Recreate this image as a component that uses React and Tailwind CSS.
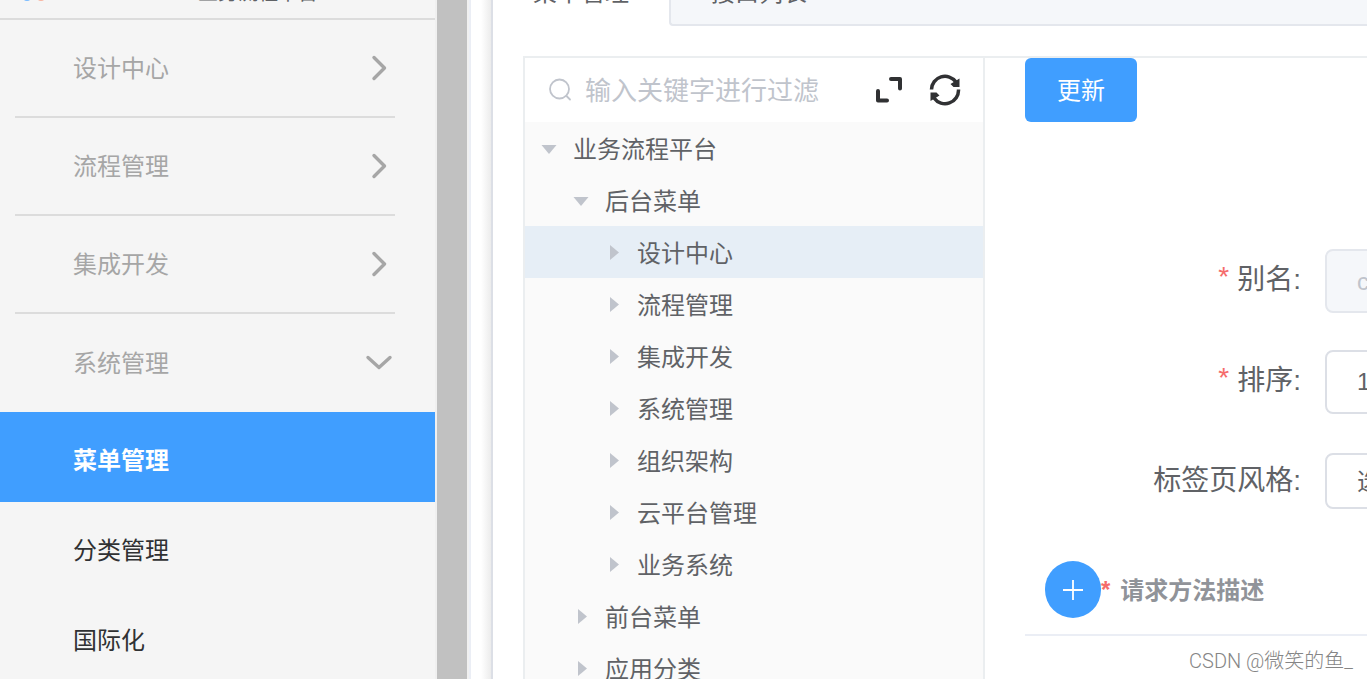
import React from "react";

const sections = ["设计中心", "流程管理", "集成开发"];

const tree = [
  { label: "业务流程平台", level: 0, open: true },
  { label: "后台菜单", level: 1, open: true },
  { label: "设计中心", level: 2, selected: true },
  { label: "流程管理", level: 2 },
  { label: "集成开发", level: 2 },
  { label: "系统管理", level: 2 },
  { label: "组织架构", level: 2 },
  { label: "云平台管理", level: 2 },
  { label: "业务系统", level: 2 },
  { label: "前台菜单", level: 1 },
  { label: "应用分类", level: 1 },
];

const indent = ["pl-[10px]", "pl-[42px]", "pl-[74px]"];

function Chevron({ down }) {
  return (
    <svg viewBox="0 0 28 28" className="h-7 w-7 shrink-0" fill="none" stroke="#a6a6a6" strokeWidth="3.400" strokeLinecap="round" strokeLinejoin="round" aria-hidden="true">
      {down ? <path d="M3 8.500l11 10L25 8.500" /> : <path d="M9 3.500l10.500 10.500-10.500 10.500" />}
    </svg>
  );
}

function Sidebar() {
  return (
    <aside className="flex w-[437px] shrink-0 flex-col overflow-hidden border-r-2 border-[#f0f0f0] bg-[#f5f5f5]">
      <header className="flex h-5 shrink-0 items-end overflow-hidden border-b-2 border-[#dcdcdc] pb-[15px] pl-5">
        <svg viewBox="0 0 28 28" className="mb-0.5 h-7 w-7 shrink-0" aria-hidden="true">
          <circle cx="7" cy="24" r="4" fill="#79bbff" />
          <circle cx="21" cy="24" r="4" fill="#f8b4a0" />
        </svg>
        <span className="ml-[150px] whitespace-nowrap text-xl leading-5 text-[#606266]">业务流程平台</span>
      </header>
      <nav className="flex flex-col text-2xl">
        {sections.map((label) => (
          <button key={label} className="ml-[15px] mr-10 flex h-[98px] items-center justify-between border-b-2 border-[#dcdcdc] pl-[58px] pr-0.5 text-[#a6a6a6]">
            <span className="pt-0.5">{label}</span>
            <Chevron />
          </button>
        ))}
        <button className="ml-[15px] mr-10 flex h-[98px] items-center justify-between pl-[58px] pr-0.5 text-[#a6a6a6]">
          <span className="pt-0.5">系统管理</span>
          <Chevron down />
        </button>
        <a href="#menu" className="flex h-[90px] items-center bg-[#409eff] pl-[73px] pt-2 font-bold text-white">菜单管理</a>
        <a href="#category" className="flex h-[90px] items-center pl-[73px] pt-2 text-[#303133]">分类管理</a>
        <a href="#i18n" className="flex h-[90px] items-center pl-[73px] pt-2 text-[#303133]">国际化</a>
      </nav>
    </aside>
  );
}

function Tabs() {
  return (
    <div className="flex h-[26px] shrink-0 items-end overflow-hidden text-2xl leading-[34px]">
      <button className="w-[176px] shrink-0 pb-4 text-[#606266]">菜单管理</button>
      <div className="flex flex-1 rounded-bl border-b-2 border-l-2 border-[#e4e7ed] bg-[#f5f7fa] pl-10">
        <button className="pb-3.5 text-[#606266]">接口列表</button>
      </div>
    </div>
  );
}

function TreePanel() {
  return (
    <section className="flex w-[462px] shrink-0 flex-col overflow-hidden border-x-2 border-[#ebeef0] bg-[#fafafa]">
      <div className="flex h-16 shrink-0 items-center bg-white pl-6 pr-[22px]">
        <svg viewBox="0 0 24 24" className="h-6 w-6 shrink-0" fill="none" stroke="#c0c4cc" strokeWidth="1.800" strokeLinecap="round" aria-hidden="true">
          <circle cx="10.500" cy="11" r="9.500" />
          <path d="M17.500 18l3.500 3.500" />
        </svg>
        <input aria-label="过滤" placeholder="输入关键字进行过滤" className="ml-3 min-w-0 flex-1 bg-transparent pt-0.5 text-[26px] outline-none placeholder:text-[#c0c4cc]" />
        <button aria-label="展开" className="mr-6 shrink-0">
          <svg viewBox="0 0 32 32" className="h-8 w-8" fill="none" stroke="#303133" strokeWidth="4" strokeLinecap="round" strokeLinejoin="round" aria-hidden="true">
            <path d="M18 5h9v9.500M5 17v9.500h9" />
          </svg>
        </button>
        <button aria-label="刷新" className="shrink-0">
          <svg viewBox="0 0 32 32" className="h-8 w-8" aria-hidden="true">
            <g fill="none" stroke="#303133" strokeWidth="3.500">
              <path d="M2.500 15.500A13.500 13.500 0 0 1 27 8" />
              <path d="M29.500 15.500A13.500 13.500 0 0 1 5 24" />
            </g>
            <path d="M30.500 4.500v8.500h-6l-3-3zM1.500 27v-8.500h6l3 3z" fill="#303133" />
          </svg>
        </button>
      </div>
      <ul className="text-2xl text-[#606266]">
        {tree.map((n) => (
          <li key={n.label + n.level}>
            <button className={`flex h-[52px] w-full items-center gap-2.5 pt-px text-left ${indent[n.level]} ${n.selected ? "bg-[#e6eef6]" : ""}`}>
              <svg viewBox="0 0 28 28" className="h-7 w-7 shrink-0" fill="#c0c4cc" aria-hidden="true">
                {n.open ? <path d="M6.500 10h15L14 19z" /> : <path d="M11 6v15l9-7.500z" />}
              </svg>
              <span className="pt-[3px]">{n.label}</span>
            </button>
          </li>
        ))}
      </ul>
    </section>
  );
}

function Label({ htmlFor, required, children }) {
  return (
    <label htmlFor={htmlFor} className="flex w-[276px] shrink-0 justify-end gap-2 text-[28px] leading-[62px] text-[#606266]">
      {required && <span className="leading-[56px] text-[#f56c6c]">*</span>}
      {children}
    </label>
  );
}

function Detail() {
  return (
    <section className="min-w-0 flex-1 overflow-hidden pl-10">
      <button className="h-16 w-28 rounded-md bg-[#409eff] pt-0.5 text-2xl text-white">更新</button>
      <form className="mt-[127px]">
        <div className="flex gap-6">
          <Label htmlFor="alias" required>别名:</Label>
          <input id="alias" disabled defaultValue="config" className="h-16 w-[480px] shrink-0 rounded-lg border-2 border-[#e4e7ed] bg-[#f5f7fa] px-[30px] pt-0.5 text-2xl text-[#c0c4cc]" />
        </div>
        <div className="mt-[37px] flex gap-6">
          <Label htmlFor="sort" required>排序:</Label>
          <input id="sort" defaultValue="1" className="h-16 w-[480px] shrink-0 rounded-lg border-2 border-[#dcdfe6] px-[30px] text-2xl text-[#606266]" />
        </div>
        <div className="mt-9 flex items-center gap-6">
          <Label htmlFor="style">标签页风格:</Label>
          <select id="style" className="h-14 w-[480px] shrink-0 appearance-none rounded-lg border-2 border-[#dcdfe6] bg-white px-[30px] pt-0.5 text-2xl text-[#606266]">
            <option>选项卡</option>
          </select>
        </div>
      </form>
      <div className="mt-[49px] flex items-center border-b-2 border-[#ebeef5] pb-4 pl-5">
        <button aria-label="添加" className="flex h-[57px] w-14 items-center justify-center rounded-full bg-[#409eff]">
          <svg viewBox="0 0 20 20" className="h-5 w-5" stroke="#fff" strokeWidth="1.800" aria-hidden="true">
            <path d="M10 0v20M0 10h20" />
          </svg>
        </button>
        <span className="text-2xl font-bold text-[#f56c6c]">*</span>
        <span className="ml-2.5 pt-[3px] text-2xl font-bold text-[#909399]">请求方法描述</span>
      </div>
    </section>
  );
}

export default function App() {
  return (
    <div className="relative flex h-screen overflow-hidden bg-white font-['Liberation_Sans','Noto_Sans_CJK_SC',sans-serif]">
      <Sidebar />
      <div className="w-[30px] shrink-0 bg-[#c1c1c1]" />
      <div className="w-1 shrink-0 border-r-2 border-[#ebeef5] bg-[#f0f0f0]" />
      <div className="flex w-5 shrink-0 justify-end">
        <div className="w-2.5 bg-linear-to-r from-white to-[#ececec]" />
      </div>
      <main className="flex min-w-0 flex-1 flex-col border-l-2 border-[#dcdfe6]">
        <Tabs />
        <div className="ml-[30px] mt-[30px] flex min-h-0 flex-1 border-t-2 border-[#ebeef0]">
          <TreePanel />
          <Detail />
        </div>
      </main>
      <span className="absolute bottom-1 right-[14px] font-['Roboto','Noto_Sans_CJK_SC',sans-serif] text-xl font-light leading-7 text-[#858585]">CSDN @微笑的鱼_</span>
    </div>
  );
}
